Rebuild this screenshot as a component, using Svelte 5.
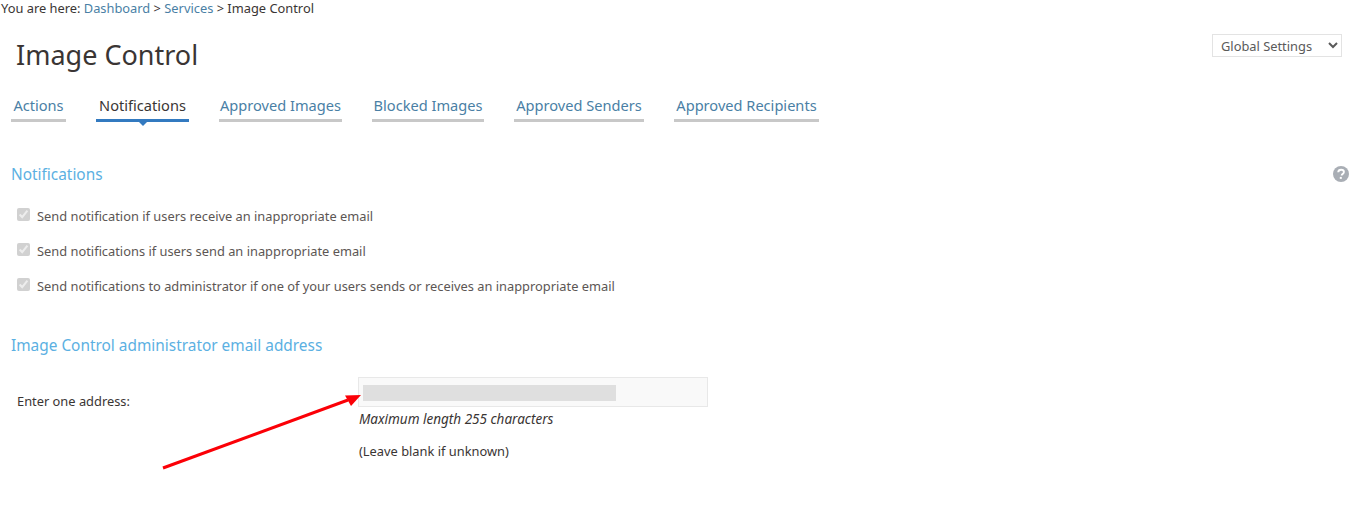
<script>
	const tabs = ['Actions', 'Notifications', 'Approved Images', 'Blocked Images', 'Approved Senders', 'Approved Recipients'];
	const active = 'Notifications';
	const options = [
		'Send notification if users receive an inappropriate email',
		'Send notifications if users send an inappropriate email',
		'Send notifications to administrator if one of your users sends or receives an inappropriate email'
	];
</script>

<main>
	<nav class="crumbs">
		You are here: <a href="#d">Dashboard</a> &gt; <a href="#s">Services</a> &gt; <span class="current">Image Control</span>
	</nav>

	<header class="head">
		<h1>Image Control</h1>
		<select class="scope">
			<option>Global Settings</option>
		</select>
	</header>

	<ul class="tabs">
		{#each tabs as tab}
			<li class:active={tab === active}><a href="#t">{tab}</a></li>
		{/each}
	</ul>

	<section class="notifications">
		<div class="section-head">
			<h2>Notifications</h2>
			<svg class="help" viewBox="0 0 16 16" width="16" height="16" aria-hidden="true">
				<circle cx="8" cy="8" r="8" fill="#a9aeb5" />
				<path d="M5.2 6.2C5.3 4.6 6.5 3.7 8.1 3.7c1.6 0 2.8 1 2.8 2.3 0 1.1-.6 1.6-1.4 2.1-.6.4-.8.6-.8 1.2v.3" fill="none" stroke="#fff" stroke-width="1.9" />
				<rect x="6.8" y="10.9" width="2" height="2" fill="#fff" />
			</svg>
		</div>
		{#each options as option}
			<label class="check">
				<input type="checkbox" checked disabled />
				<span>{option}</span>
			</label>
		{/each}
	</section>

	<section class="address">
		<h2>Image Control administrator email address</h2>
		<div class="field">
			<span class="field-label">Enter one address:</span>
			<div class="field-body">
				<div class="fake-input"><div class="redacted"></div></div>
				<p class="hint">Maximum length 255 characters</p>
				<p class="blank">(Leave blank if unknown)</p>
			</div>
		</div>
	</section>

	<svg class="arrow" width="210" height="80" viewBox="0 0 210 80" aria-hidden="true">
		<line x1="3" y1="77" x2="188" y2="9" stroke="#fb0007" stroke-width="3" />
		<polygon points="201,4 185,4.5 191,15" fill="#fb0007" />
	</svg>
</main>

<style>
	:global(body) {
		margin: 0;
		background: #fff;
	}

	main {
		position: relative;
		height: 517px;
		overflow: hidden;
		font-family: "Noto Sans", sans-serif;
		font-size: 12.85px;
		color: #3a3534;
	}

	a {
		color: #4a7fa5;
		text-decoration: none;
	}

	.crumbs {
		padding: 0 0 0 1px;
		line-height: 16px;
	}

	.current {
		color: #3a3534;
	}

	.head {
		display: flex;
		justify-content: space-between;
		align-items: flex-start;
		padding: 18px 11px 0 16px;
	}

	h1 {
		margin: 0;
		padding-top: 1px;
		font-size: 27px;
		font-weight: 400;
		line-height: 40px;
	}

	.scope {
		width: 130px;
		height: 23px;
		padding: 0 4px;
		border: 1px solid #e3e3e3;
		background: #fff;
		color: #5a5a5a;
		font: inherit;
	}

	.tabs {
		display: grid;
		grid-template-columns: 55px 93px 123px 112px 130px 145px;
		gap: 30px;
		margin: 0;
		padding: 19px 0 0 11px;
		list-style: none;
		font-size: 14.6px;
	}

	.tabs li {
		position: relative;
		padding-bottom: 3px;
		border-bottom: 3px solid #c8c8c8;
		line-height: 22px;
		text-align: center;
		white-space: nowrap;
	}

	.tabs .active {
		border-bottom-color: #337ac0;
	}

	.tabs .active a {
		color: #3a3534;
	}

	.tabs .active::after {
		content: "";
		position: absolute;
		left: 50%;
		bottom: -7px;
		margin-left: -4px;
		border: 4px solid transparent;
		border-top-color: #337ac0;
		border-bottom-width: 0;
	}

	h2 {
		margin: 0;
		font-size: 15.4px;
		font-weight: 400;
		color: #5bb0e2;
		line-height: 24px;
	}

	.notifications {
		padding: 41px 4px 0 11px;
	}

	.section-head {
		display: flex;
		justify-content: space-between;
		align-items: center;
		height: 24px;
		margin-bottom: 11px;
	}

	.help {
		display: block;
		margin-top: -2px;
	}

	.check {
		display: flex;
		align-items: center;
		gap: 7px;
		height: 35px;
		padding-left: 6px;
		color: #5c5654;
	}

	.check input {
		width: 13px;
		height: 13px;
		margin: -3px 0 0 0;
	}

	.address {
		padding: 31px 0 0 11px;
	}

	.field {
		display: flex;
		margin-top: 19px;
	}

	.field-label {
		box-sizing: border-box;
		width: 347px;
		padding: 16px 0 0 6px;
		line-height: 16px;
	}

	.fake-input {
		box-sizing: border-box;
		width: 350px;
		height: 30px;
		padding: 7px 4px;
		border: 1px solid #e8e8e8;
		background: #f9f9f9;
	}

	.redacted {
		width: 253px;
		height: 16px;
		background: #dfdfdf;
	}

	.field-body p {
		margin: 0;
		padding-left: 1px;
		line-height: 16px;
	}

	.field-body .hint {
		margin-top: 4px;
		font-size: 13.5px;
		font-style: italic;
	}

	.field-body .blank {
		margin-top: 16px;
	}

	.arrow {
		position: absolute;
		left: 160px;
		top: 391px;
	}
</style>
